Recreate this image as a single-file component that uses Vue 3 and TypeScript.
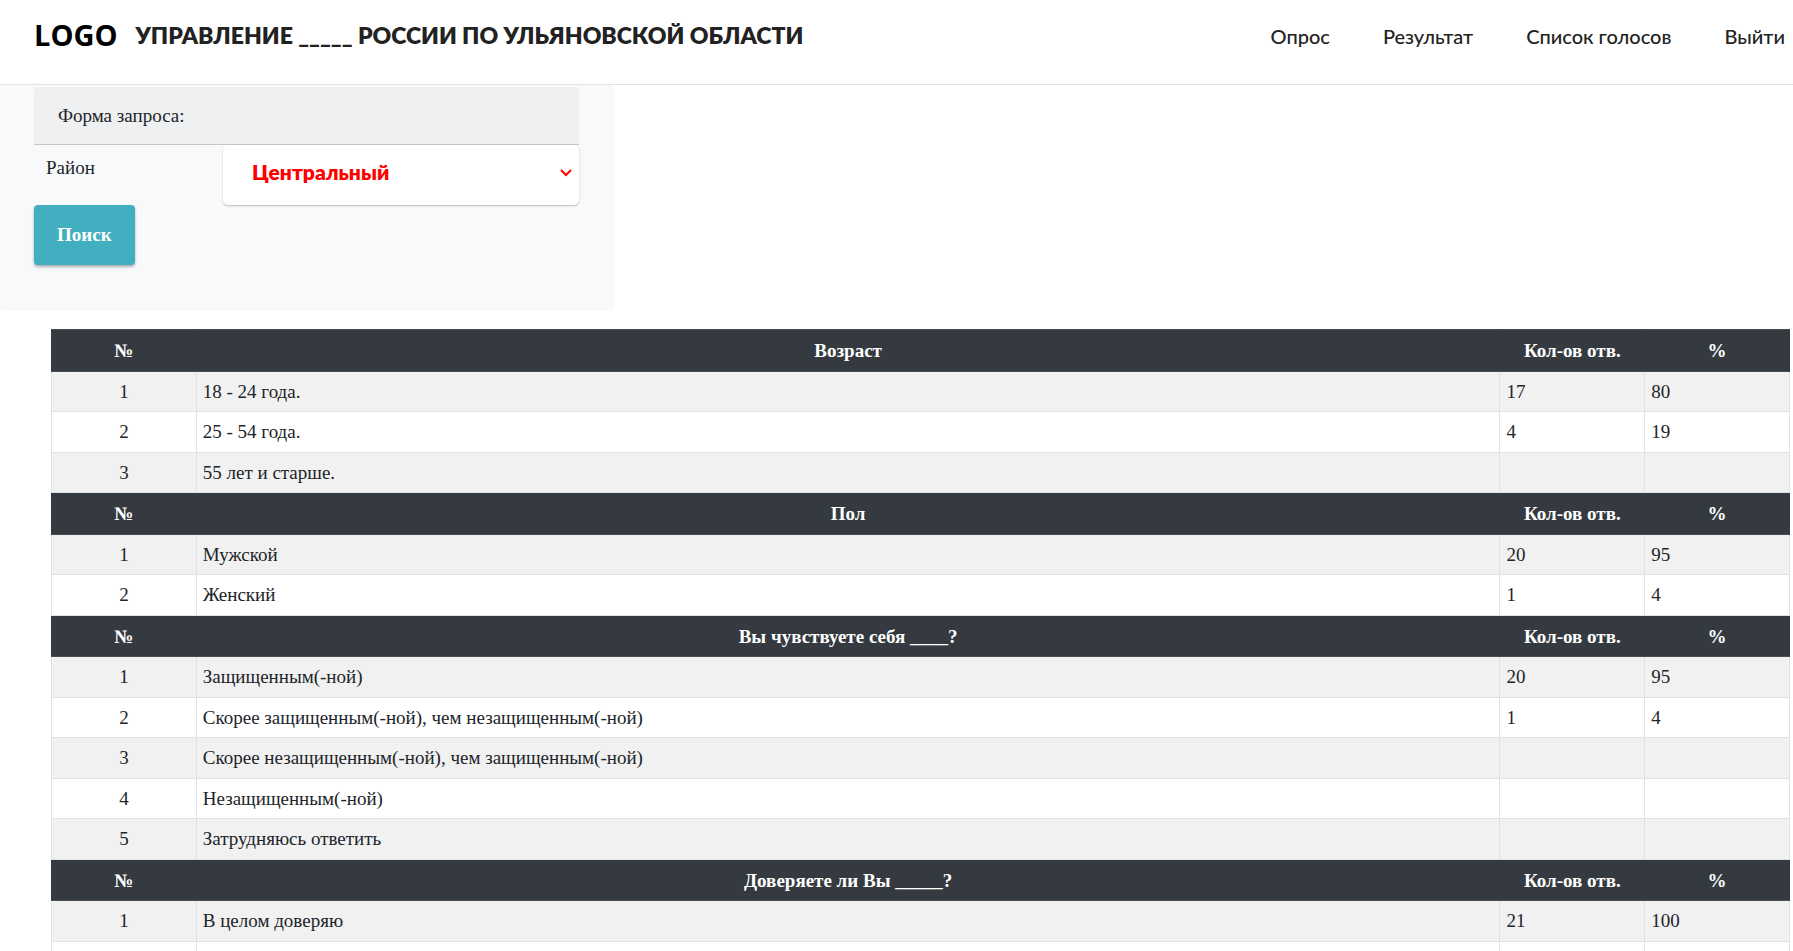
<script setup lang="ts">
import { ref } from 'vue'

interface Answer {
  no: string
  text: string
  count: string
  percent: string
}

interface Question {
  title: string
  answers: Answer[]
}

const links: string[] = ['Опрос', 'Результат', 'Список голосов', 'Выйти']
const districts: string[] = ['Центральный']
const district = ref<string>('Центральный')

const row = (no: string, text: string, count = '', percent = ''): Answer => ({ no, text, count, percent })

const questions: Question[] = [
  {
    title: 'Возраст',
    answers: [
      row('1', '18 - 24 года.', '17', '80'),
      row('2', '25 - 54 года.', '4', '19'),
      row('3', '55 лет и старше.'),
    ],
  },
  {
    title: 'Пол',
    answers: [row('1', 'Мужской', '20', '95'), row('2', 'Женский', '1', '4')],
  },
  {
    title: 'Вы чувствуете себя ____?',
    answers: [
      row('1', 'Защищенным(-ной)', '20', '95'),
      row('2', 'Скорее защищенным(-ной), чем незащищенным(-ной)', '1', '4'),
      row('3', 'Скорее незащищенным(-ной), чем защищенным(-ной)'),
      row('4', 'Незащищенным(-ной)'),
      row('5', 'Затрудняюсь ответить'),
    ],
  },
  {
    title: 'Доверяете ли Вы _____?',
    answers: [row('1', 'В целом доверяю', '21', '100'), row('', '')],
  },
]
</script>

<template>
  <div class="page">
    <header class="topbar">
      <a class="brand" href="#">
        <span class="logo">LOGO</span>
        <span class="title">УПРАВЛЕНИЕ _____ РОССИИ ПО УЛЬЯНОВСКОЙ ОБЛАСТИ</span>
      </a>
      <nav class="nav">
        <a v-for="link in links" :key="link" href="#">{{ link }}</a>
      </nav>
    </header>

    <main>
      <form class="query" @submit.prevent>
        <div class="query-head">Форма запроса:</div>
        <div class="field">
          <label for="district">Район</label>
          <div class="select">
            <select id="district" v-model="district">
              <option v-for="d in districts" :key="d" :value="d">{{ d }}</option>
            </select>
            <svg class="chevron" viewBox="0 0 12 8" width="12" height="8" aria-hidden="true">
              <path d="M1 1 L6 6 L11 1" fill="none" stroke="#f00" stroke-width="2" />
            </svg>
          </div>
        </div>
        <button class="search" type="submit">Поиск</button>
      </form>

      <div class="results">
        <table>
          <colgroup>
            <col class="narrow" />
            <col />
            <col class="narrow" />
            <col class="narrow" />
          </colgroup>
          <tbody v-for="q in questions" :key="q.title">
            <tr class="head">
              <th scope="col">№</th>
              <th scope="col">{{ q.title }}</th>
              <th scope="col">Кол-ов отв.</th>
              <th scope="col">%</th>
            </tr>
            <tr v-for="(a, i) in q.answers" :key="i" class="answer">
              <td class="no">{{ a.no }}</td>
              <td>{{ a.text }}</td>
              <td>{{ a.count }}</td>
              <td>{{ a.percent }}</td>
            </tr>
          </tbody>
        </table>
      </div>
    </main>
  </div>
</template>

<style>
body {
  margin: 0;
  background: #fff;
}
</style>

<style scoped>
.page {
  height: 100vh;
  overflow: hidden;
  color: #212529;
  font-family: 'Liberation Serif', 'Times New Roman', serif;
  font-size: 19px;
  line-height: 1.5;
}

.topbar {
  display: flex;
  align-items: flex-start;
  justify-content: space-between;
  box-sizing: border-box;
  height: 85px;
  padding: 16px 8px 0 34px;
  border-bottom: 1px solid #e2e2e2;
  font-family: Lato, 'Open Sans', sans-serif;
  white-space: nowrap;
}

.brand {
  display: flex;
  align-items: center;
  gap: 18px;
  color: #222;
  text-decoration: none;
}

.logo {
  color: #000;
  font-family: 'Open Sans', 'Noto Sans', sans-serif;
  font-size: 29px;
  font-weight: 700;
  line-height: 38px;
}

.title {
  font-size: 23px;
  font-weight: 800;
  line-height: 38px;
}

.nav {
  display: flex;
  gap: 53px;
}

.nav a {
  color: #222;
  font-size: 20px;
  font-weight: 500;
  line-height: 40px;
  text-decoration: none;
}

.query {
  box-sizing: border-box;
  width: 100%;
  max-width: 614px;
  padding: 2px 35px 46px 34px;
  border-radius: 0 0 5px 5px;
  background: #f8f9fb;
}

.query-head {
  padding: 14px 24px;
  border-bottom: 1px solid #c6c7c9;
  border-radius: 4px 4px 0 0;
  background: #eff0f2;
  line-height: 29px;
}

.field {
  display: flex;
}

.field label {
  flex: 1;
  padding: 9px 12px;
}

.select {
  position: relative;
  flex: 0 0 356px;
}

.select select {
  display: block;
  box-sizing: border-box;
  width: 100%;
  height: 60px;
  margin: 0;
  padding: 0 28px 7px 29px;
  border: 0;
  border-radius: 5px;
  appearance: none;
  background: #fff;
  box-shadow: 0 1px 2px rgba(0, 0, 0, 0.24);
  color: #f00;
  font-family: Lato, 'Open Sans', sans-serif;
  font-size: 21px;
  font-weight: 800;
}

.chevron {
  position: absolute;
  top: 24px;
  right: 7px;
  pointer-events: none;
}

.search {
  display: block;
  height: 60px;
  margin: 0;
  padding: 0 23px;
  border: 0;
  border-radius: 4px;
  background: #41afbf;
  box-shadow: 0 2px 3px rgba(0, 0, 0, 0.3);
  color: #fff;
  font: inherit;
  font-weight: 700;
}

.results {
  padding: 18px 3px 0 51px;
}

table {
  width: 100%;
  border-collapse: collapse;
  table-layout: fixed;
}

.narrow {
  width: 8.33%;
}

th {
  padding: 7px 6px 5px;
  border: 1px solid #454d55;
  border-right-color: #343a40;
  border-left-color: #343a40;
  background: #343a40;
  color: #fff;
}

td {
  height: 28px;
  padding: 6px 6px 5px;
  border: 1px solid #dee2e6;
}

.no {
  text-align: center;
}

.answer:nth-child(even) {
  background: #f1f1f1;
}
</style>
